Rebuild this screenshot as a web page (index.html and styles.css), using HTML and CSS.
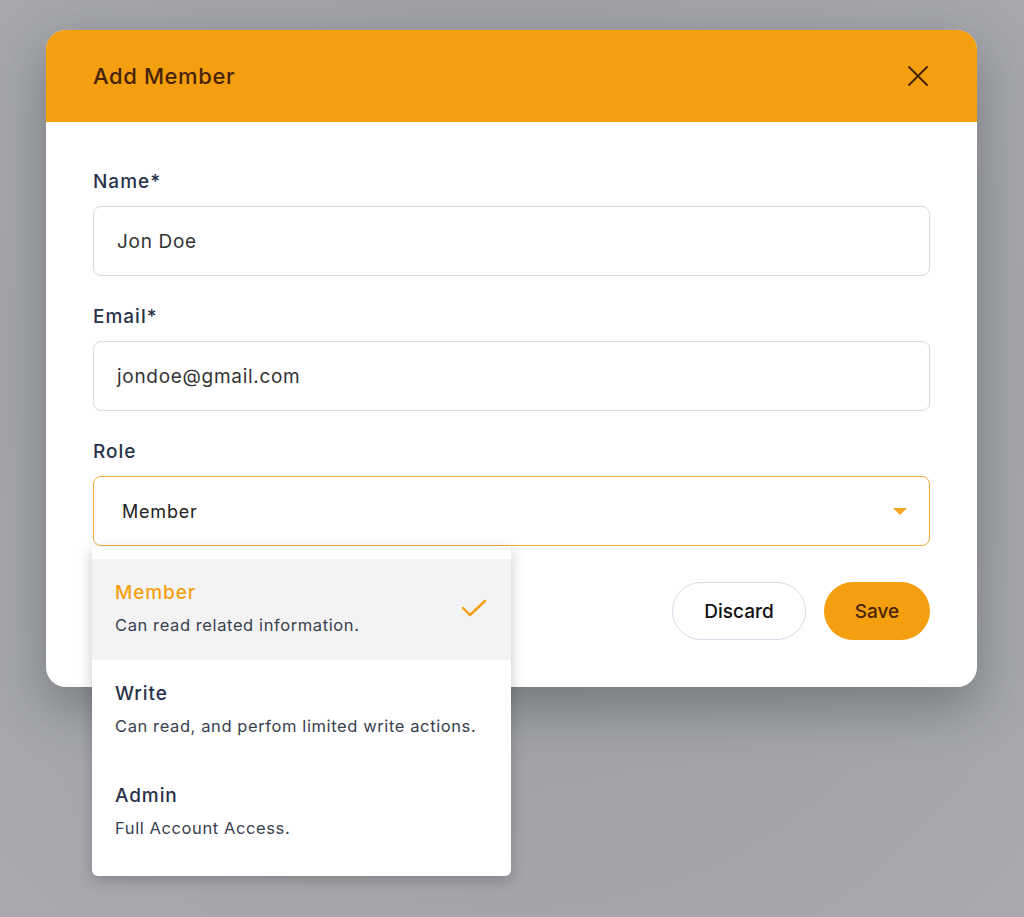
FILE: index.html
```html
<!DOCTYPE html>
<html lang="en">
<head>
  <meta charset="UTF-8">
  <title>Add Member</title>
  <link rel="stylesheet" href="styles.css">
</head>
<body>
  <div class="modal">
    <div class="modal-head">
      <h2>Add Member</h2>
      <button class="close" aria-label="Close">
        <svg width="22" height="22" viewBox="0 0 22 22"><path d="M2 2 L20 20 M20 2 L2 20" stroke="#4a2408" stroke-width="2" stroke-linecap="round"/></svg>
      </button>
    </div>
    <div class="modal-body">
      <label class="label">Name*</label>
      <div class="input">Jon Doe</div>

      <label class="label">Email*</label>
      <div class="input">jondoe@gmail.com</div>

      <label class="label">Role</label>
      <div class="select-wrap">
        <div class="select">
          <span>Member</span>
          <span class="caret"></span>
        </div>
        <ul class="menu">
          <li class="option active">
            <div>
              <div class="opt-title">Member</div>
              <div class="opt-desc">Can read related information.</div>
            </div>
            <svg width="26" height="20" viewBox="0 0 26 20"><path d="M2 10 L9 17 L24 3" fill="none" stroke="#f39f0f" stroke-width="2.4" stroke-linecap="round" stroke-linejoin="round"/></svg>
          </li>
          <li class="option">
            <div>
              <div class="opt-title">Write</div>
              <div class="opt-desc">Can read, and perfom limited write actions.</div>
            </div>
          </li>
          <li class="option">
            <div>
              <div class="opt-title">Admin</div>
              <div class="opt-desc">Full Account Access.</div>
            </div>
          </li>
        </ul>
      </div>

      <div class="actions">
        <button class="btn discard">Discard</button>
        <button class="btn save">Save</button>
      </div>
    </div>
  </div>
</body>
</html>
```

FILE: styles.css
```css
body {
  margin: 0;
  padding: 30px 47px 0 46px;
  min-height: 917px;
  box-sizing: border-box;
  background: radial-gradient(ellipse at 50% 40%, #9a9ca0 0%, #a3a5a9 70%, #a8aaae 100%);
  font-family: 'Inter', 'Liberation Sans', sans-serif;
  color: #2b3446;
}
.modal {
  background: #fff;
  border-radius: 20px;
  box-shadow: 0 20px 50px rgba(40, 42, 48, 0.35);
}
.modal-head {
  height: 92px;
  background: #f39f0f;
  border-radius: 20px 20px 0 0;
  display: flex;
  align-items: center;
  justify-content: space-between;
  padding: 0 48px 0 47px;
}
.modal-head h2 {
  margin: 0;
  font-size: 22px;
  font-weight: 500;
  letter-spacing: 0.6px;
  color: #4a2408;
}
.close {
  background: none;
  border: none;
  padding: 0;
  display: flex;
  cursor: pointer;
}
.modal-body {
  padding: 48px 47px 47px 47px;
  display: flex;
  flex-direction: column;
}
.label {
  font-size: 19px;
  line-height: 24px;
  font-weight: 500;
  letter-spacing: 1px;
  color: #27324a;
  margin-bottom: 12px;
}
.input {
  height: 70px;
  box-sizing: border-box;
  border: 1px solid #d3dbe7;
  border-radius: 8px;
  padding: 0 23px;
  display: flex;
  align-items: center;
  font-size: 19px;
  letter-spacing: 0.7px;
  color: #333;
  margin-bottom: 29px;
}
.select-wrap {
  position: relative;
}
.select {
  height: 70px;
  box-sizing: border-box;
  border: 1px solid #f5ae3a;
  border-radius: 8px;
  padding: 0 22px 0 28px;
  display: flex;
  align-items: center;
  justify-content: space-between;
  font-size: 18px;
  letter-spacing: 0.8px;
  color: #222;
}
.caret {
  width: 0;
  height: 0;
  border-left: 7px solid transparent;
  border-right: 7px solid transparent;
  border-top: 7px solid #f5a623;
}
.menu {
  position: absolute;
  top: 71px;
  left: -1px;
  width: 419px;
  margin: 0;
  padding: 12px 0 12px;
  list-style: none;
  background: #fff;
  border-radius: 0 0 6px 6px;
  box-shadow: 0 4px 14px rgba(30, 32, 40, 0.25);
  z-index: 2;
}
.option {
  display: flex;
  align-items: center;
  justify-content: space-between;
  padding: 20px 24px 24px 23px;
  height: 102px;
  box-sizing: border-box;
}
.option.active {
  background: #f3f3f3;
  height: 101px;
}
.opt-title {
  font-size: 19px;
  line-height: 28px;
  font-weight: 500;
  letter-spacing: 0.9px;
  color: #27324a;
}
.active .opt-title {
  color: #f39f0f;
}
.opt-desc {
  margin-top: 6px;
  font-size: 16.5px;
  line-height: 24px;
  letter-spacing: 0.6px;
  color: #39414f;
}
.actions {
  display: flex;
  justify-content: flex-end;
  gap: 18px;
  margin-top: 36px;
}
.btn {
  height: 58px;
  border-radius: 29px;
  font-family: inherit;
  font-size: 19px;
  font-weight: 500;
  cursor: pointer;
}
.discard {
  width: 134px;
  background: #fff;
  border: 1px solid #d5dde8;
  color: #111;
}
.save {
  width: 106px;
  background: #f39f0f;
  border: none;
  color: #4a2408;
}
```
